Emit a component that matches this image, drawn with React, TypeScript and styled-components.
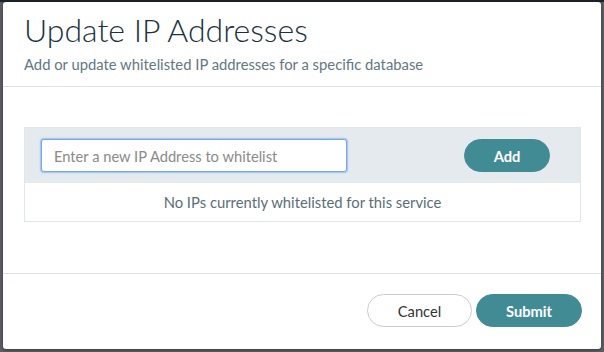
import styled, { createGlobalStyle } from 'styled-components';

const GlobalStyle = createGlobalStyle`
  html, body {
    margin: 0;
    padding: 0;
    width: 604px;
    height: 352px;
    overflow: hidden;
    font-family: Lato, 'Open Sans', sans-serif;
  }
`;

const Backdrop = styled.div`
  width: 604px;
  height: 352px;
  box-sizing: border-box;
  padding: 2px 3px 3px 3px;
  background: linear-gradient(#18232c 0 2px, #5b5d60 2px);
`;

const Modal = styled.div`
  height: 100%;
  background: #fff;
  border-radius: 3px;
  box-shadow: 0 1px 3px rgba(0, 0, 0, 0.4);
  display: flex;
  flex-direction: column;
`;

const Header = styled.div`
  padding: 8px 20px 14px 21px;
  border-bottom: 1px solid #dbe2e4;
`;

const Title = styled.h1`
  margin: 0;
  font-size: 32px;
  font-weight: 300;
  line-height: 40px;
  color: #1c3140;
`;

const Subtitle = styled.p`
  margin: 6px 0 0;
  font-size: 14.8px;
  line-height: 16px;
  color: #627783;
`;

const Body = styled.div`
  flex: 1;
  padding: 40px 20px 0 21px;
  border-bottom: 1px solid #dbe2e4;
`;

const Panel = styled.div`
  border: 1px solid #e1e6e9;
`;

const AddRow = styled.div`
  background: #e5eaee;
  height: 55px;
  display: flex;
  align-items: center;
  justify-content: space-between;
  padding: 0 30px 0 16px;
`;

const IpInput = styled.input`
  width: 306px;
  height: 33px;
  box-sizing: border-box;
  border: 1px solid #7aa8e6;
  border-radius: 3px;
  box-shadow: 0 0 0 1px #a8c8f2, 0 0 3px #8db6ee;
  padding: 0 12px;
  font-family: Lato, 'Open Sans', sans-serif;
  font-size: 14.7px;
  color: #333;
  outline: none;

  &::placeholder {
    color: #8a8a8a;
  }
`;

const Pill = styled.button<{ primary?: boolean; w: number }>`
  width: ${({ w }) => w}px;
  height: 33px;
  border-radius: 17px;
  border: 1px solid ${({ primary }) => (primary ? '#418b95' : '#c9cccf')};
  background: ${({ primary }) => (primary ? '#418b95' : '#fff')};
  color: ${({ primary }) => (primary ? '#fff' : '#333')};
  font-family: Lato, 'Open Sans', sans-serif;
  font-size: 14.7px;
  font-weight: ${({ primary }) => (primary ? 700 : 400)};
  cursor: pointer;
  padding: 0;
`;

const EmptyRow = styled.div`
  height: 38px;
  display: flex;
  align-items: center;
  justify-content: center;
  font-size: 14.8px;
  color: #5a6e79;
`;

const Footer = styled.div`
  height: 75px;
  box-sizing: border-box;
  display: flex;
  align-items: center;
  justify-content: flex-end;
  gap: 4px;
  padding: 0 19px 2px 0;
`;

export default function App() {
  return (
    <>
      <GlobalStyle />
      <Backdrop>
        <Modal>
          <Header>
            <Title>Update IP Addresses</Title>
            <Subtitle>Add or update whitelisted IP addresses for a specific database</Subtitle>
          </Header>
          <Body>
            <Panel>
              <AddRow>
                <IpInput placeholder="Enter a new IP Address to whitelist" />
                <Pill primary w={86}>Add</Pill>
              </AddRow>
              <EmptyRow>No IPs currently whitelisted for this service</EmptyRow>
            </Panel>
          </Body>
          <Footer>
            <Pill w={105}>Cancel</Pill>
            <Pill primary w={106}>Submit</Pill>
          </Footer>
        </Modal>
      </Backdrop>
    </>
  );
}
